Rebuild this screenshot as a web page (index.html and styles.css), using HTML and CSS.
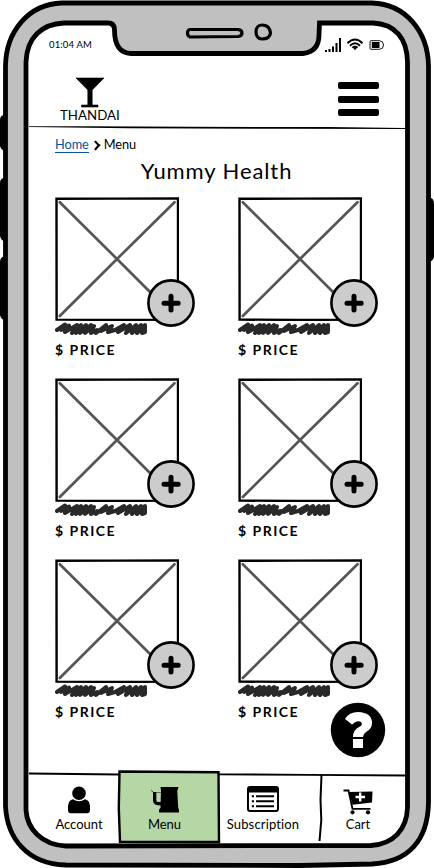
FILE: index.html
```html
<!DOCTYPE html>
<html lang="en">
<head>
<meta charset="utf-8">
<title>Thandai</title>
<link rel="stylesheet" href="styles.css">
</head>
<body>
<svg class="defs" width="0" height="0" aria-hidden="true">
  <symbol id="picture" viewBox="0 0 124 124">
    <path d="M1.5 1.800L60 1.600L123 1.500L123 122.600L60 122.900L1.600 122.600Z" fill="#fff" stroke="#000" stroke-width="2.400"/>
    <path d="M4.800 5.200L62 62L119 119M119.500 5.200L62 62L4.800 119" fill="none" stroke="#555" stroke-width="2.700" stroke-linecap="round"/>
  </symbol>
  <symbol id="scribble" viewBox="0 0 93 15">
    <path d="M2 9L10 3.500L6 9L14 4.500L10 11L22 4L17 12L26 4L21 12L31 4L25 12L36 4L30 12L39 5L36 12L42 9L41 12L51 4L46 10L57 5L53 11L60 9L69 4L63 11L75 4L71 12L81 4L77 12L86 4L82 12L90 4L87 12L90 11V5" fill="none" stroke="#292929" stroke-width="4" stroke-linejoin="round" stroke-linecap="round"/>
  </symbol>
  <symbol id="plus" viewBox="0 0 48 48">
    <circle cx="24" cy="24" r="22.600" fill="#ccc" stroke="#000" stroke-width="2.600"/>
    <path d="M24 17.200V31M17 24.200H31.200" stroke="#000" stroke-width="5" stroke-linecap="round"/>
  </symbol>
</svg>

<svg class="device" viewBox="0 0 434 868" aria-hidden="true">
  <path d="M5 115Q0 115 0 120V146Q1 150 5 151ZM5 178Q0 178 0 183V236Q1 241 5 241ZM5 256Q0 257 0 262V315Q1 320 5 320ZM427 198H431Q434 199 434 204V257Q433 262 427 262Z"/>
  <path d="M62 3H372C406 4 428 32 428.500 66V802C428 841 408 862 372 864L300 865.500L66 865C27 864 7 838 5.500 806V66C6 32 28 4 62 3Z" fill="#c0c0c0" stroke="#000" stroke-width="4.800"/>
  <path d="M64 23H108Q114.500 23 114.500 30C114.500 42 118 53 131 53.500H303C315 52 319 45 319 35L319.500 23H373C395 24 407 38 407.500 62V807C407 830 393 844 371 845.500L66 846C42 845 27 829 26 810V62C27 37 42 24 64 23Z" fill="#fff" stroke="#000" stroke-width="4.800"/>
  <path d="M190 29.500H238Q242 30 242 33T238 36.500L190 37Q187.500 36 187.500 33T190 29.500Z" fill="none" stroke="#000" stroke-width="3.200"/>
  <path d="M262 25C267 25 270 28 270.500 33C270 37 267 39 262 39C258 39 256 36 256 32C256 28 258 25 262 25Z" fill="none" stroke="#000" stroke-width="3.200"/>
</svg>

<div class="screen">
  <div class="status">
    <span class="time">01:04 AM</span>
    <svg class="signals" viewBox="0 0 60 16">
      <path d="M0 13H2V15H0ZM3.500 12H5.500V15H3.500ZM7 9.500H9V15H7ZM10.500 6H12.500V15H10.500ZM14 1H16V15H14Z"/>
      <path d="M22.500 6.200Q30 -1 37.500 6.200M25 8.700Q30 4 35 8.700M27.400 10.800Q30 8.500 32.600 10.800" fill="none" stroke="#000" stroke-width="1.900"/>
      <circle cx="30" cy="11.600" r="1.200"/>
      <path d="M46 3.700H54.500Q58.500 4 58.500 8T54.500 12.300H46Q45 12.300 45 11.300V4.700Q45 3.700 46 3.700Z" fill="none" stroke="#111"/>
      <path d="M46.800 5H54.500V11H46.800Z"/>
    </svg>
  </div>

  <header class="header">
    <div class="brand">
      <svg viewBox="0 0 30 31"><path d="M1 1H29L17.200 13V28H23V30H6.500V28H12.800V13Z" stroke="#000" stroke-linejoin="round" stroke-width=".6"/></svg>
      <span>THANDAI</span>
    </div>
    <div class="menu-button"><i></i><i></i><i></i></div>
  </header>
  <svg class="rule" viewBox="0 0 376 4"><path d="M0 .2L60 .2L160 .8L300 1L376 2V3L250 2.800L100 2.300L0 1.100Z"/></svg>

  <main class="content">
    <nav class="crumbs">
      <a>Home</a>
      <svg viewBox="0 0 7 11"><path d="M1 1Q3 4 5 5.200Q3 7 1 10" fill="none" stroke="#000" stroke-width="2.200"/></svg>
      <span>Menu</span>
    </nav>
    <h1 class="title">Yummy Health</h1>
    <div class="grid">
      <article class="card"><svg class="picture"><use href="#picture"/></svg><svg class="scribble"><use href="#scribble"/></svg><b class="price">$ PRICE</b><svg class="plus"><use href="#plus"/></svg></article>
      <article class="card"><svg class="picture"><use href="#picture"/></svg><svg class="scribble"><use href="#scribble"/></svg><b class="price">$ PRICE</b><svg class="plus"><use href="#plus"/></svg></article>
      <article class="card"><svg class="picture"><use href="#picture"/></svg><svg class="scribble"><use href="#scribble"/></svg><b class="price">$ PRICE</b><svg class="plus"><use href="#plus"/></svg></article>
      <article class="card"><svg class="picture"><use href="#picture"/></svg><svg class="scribble"><use href="#scribble"/></svg><b class="price">$ PRICE</b><svg class="plus"><use href="#plus"/></svg></article>
      <article class="card"><svg class="picture"><use href="#picture"/></svg><svg class="scribble"><use href="#scribble"/></svg><b class="price">$ PRICE</b><svg class="plus"><use href="#plus"/></svg></article>
      <article class="card"><svg class="picture"><use href="#picture"/></svg><svg class="scribble"><use href="#scribble"/></svg><b class="price">$ PRICE</b><svg class="plus"><use href="#plus"/></svg></article>
    </div>
  </main>

  <nav class="tabs">
    <svg class="tab-lines" viewBox="0 0 376 76" aria-hidden="true">
      <path d="M0 3.500L90 4.500M190 4.300L280 4.800L376 5.500" fill="none" stroke="#000" stroke-width="1.800"/>
      <path d="M90.500 1.500L189.500 2.300L190 72L91 71.700L89.800 38Z" fill="#b5d6a5" stroke="#000" stroke-width="2.400"/>
      <path d="M292.500 5L291.500 30L292.300 50L290.500 71" fill="none" stroke="#000" stroke-width="2"/>
    </svg>
    <a class="tab account">
      <svg viewBox="0 0 24 28"><ellipse cx="12" cy="7.300" rx="6.800" ry="6.800"/><path d="M6 13.200Q12 17.500 18 13.200Q22.500 14 23 20V24Q23 27.300 20 27.300H4Q1 27.300 1 24V20Q1.500 14 6 13.200Z"/></svg>
      <span>Account</span>
    </a>
    <a class="tab menu">
      <svg viewBox="0 0 30 28"><path d="M10.500 1H28.500L27.300 5L28.200 22L29 23.500V26.500H9V23.500L10.500 22L11 5Z"/><path d="M1 3.200H12V6H2ZM1 3.200L3 6V15Q3.500 19.500 11 19.500V16H8Q6.300 16 6.300 14V6.500H12V3.200Z"/></svg>
      <span>Menu</span>
    </a>
    <a class="tab subscription">
      <svg viewBox="0 0 32 26"><rect x="1" y="1" width="30" height="24" rx="2" fill="#fff" stroke="#000" stroke-width="2"/><path d="M1 2H31V6.500H1ZM9 9.200H27V11.200H9ZM9 14.200H27V16.200H9ZM9 19.200H27V21.200H9ZM4.800 9.200H7V11.200H4.800ZM4.800 14.200H7V16.200H4.800ZM4.800 19.200H7V21.200H4.800Z"/></svg>
      <span>Subscription</span>
    </a>
    <a class="tab cart">
      <svg viewBox="0 0 30 26"><path d="M6 3L29.500 2.500L29 13.500L9.500 15.800Z"/><path d="M.5 1.500H5.500L9.500 19.800H27.500" fill="none" stroke="#000" stroke-width="1.800"/><path d="M17.200 3.500V12.500M12.500 8H22" stroke="#fff" stroke-width="2.400"/><circle cx="9.500" cy="23.300" r="2.100"/><circle cx="25" cy="23.300" r="2.100"/></svg>
      <span>Cart</span>
    </a>
  </nav>
</div>
<svg class="help" viewBox="0 0 56 56" role="img" aria-label="Help"><circle cx="28" cy="28" r="27.200"/><path d="M15 17Q19 10 28 10Q42 10.500 42 21Q42 27 36 30Q33 32 33 35H23Q23 28 29 25Q33 23 31.500 20.500Q28 17 22 22.500Z" fill="#fff"/><path d="M23 37H33V46H23Z" fill="#fff"/></svg>
</body>
</html>
```
FILE: styles.css
```css
* { box-sizing: border-box; }
body {
  margin: 0;
  width: 434px;
  height: 868px;
  position: relative;
  overflow: hidden;
  background: #fff;
  color: #000;
  font-family: Lato, "Liberation Sans", sans-serif;
}
svg { display: block; }
.defs { position: absolute; }
.device { position: absolute; inset: 0; width: 434px; height: 868px; }
.screen {
  position: relative;
  display: flex;
  flex-direction: column;
  width: 376px;
  height: 845px;
  margin-left: 29px;
  padding-top: 37px;
}
.status { display: flex; justify-content: space-between; height: 37px; padding: 0 20px 0 20px; }
.time { font-size: 9.500px; line-height: 16px; letter-spacing: .15px; }
.signals { width: 60px; height: 16px; }
.header { display: flex; justify-content: space-between; height: 52px; padding: 3px 26px 0 31px; }
.brand { display: flex; flex-direction: column; align-items: center; }
.brand svg { width: 30px; height: 31px; }
.brand span { font-size: 13.300px; line-height: 15px; }
.menu-button { display: flex; flex-direction: column; gap: 6.800px; padding-top: 5px; }
.menu-button i { display: block; width: 41px; height: 6.900px; border-radius: 2px; background: #000; }
.rule { width: 376px; height: 4px; }
.content { padding: 6px 27px 0 26px; }
.crumbs { display: flex; align-items: center; height: 17px; font-size: 12.800px; line-height: 15px; letter-spacing: -.1px; }
.crumbs a { color: #0b4fa0; border-bottom: 1px solid #0b4fa0; }
.crumbs svg { width: 7px; height: 11px; margin: 2px 3px 0 5px; }
.title { margin: 4px 0 0; height: 40px; text-align: center; font-size: 22px; line-height: 28px; font-weight: 400; letter-spacing: .9px; }
.grid { display: grid; grid-template-columns: 140px 140px; column-gap: 43px; grid-auto-rows: 181px; }
.card { position: relative; }
.picture { width: 124px; height: 124px; }
.scribble { width: 93px; height: 15px; }
.price { display: block; margin-top: 6px; font-size: 14px; line-height: 16px; letter-spacing: 1.500px; }
.plus { position: absolute; left: 92px; top: 82px; width: 48px; height: 48px; }
.tabs { position: relative; display: grid; grid-template-columns: 90px 100px 102px 84px; height: 75px; margin-top: auto; padding-top: 16px; }
.tab-lines { position: absolute; left: 0; top: 0; width: 376px; height: 76px; }
.tab { position: relative; display: flex; flex-direction: column; align-items: center; font-size: 13px; }
.tab svg { height: 28px; }
.tab span { line-height: 16px; margin-top: 2px; }
.account { padding-left: 10px; }
.account svg { width: 24px; }
.menu { padding-right: 9px; }
.menu svg { width: 30px; }
.subscription { padding-right: 14px; letter-spacing: .15px; }
.subscription svg { width: 32px; height: 26px; margin-bottom: 2px; }
.cart { padding-right: 10px; }
.cart svg { width: 30px; height: 26px; margin: 3px 0 -1px; }
.help { position: absolute; left: 330px; top: 702px; width: 56px; height: 56px; }
```
